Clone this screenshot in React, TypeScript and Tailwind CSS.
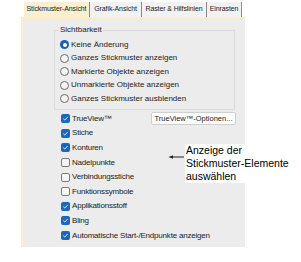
import React from 'react'

const font = { fontFamily: '"Liberation Sans", Arial, sans-serif' }

const Radio = ({ checked, label }: { checked?: boolean; label: string }) => (
  <div className="flex items-center h-[13.5px]">
    {checked ? (
      <span className="w-[9px] h-[9px] rounded-full bg-[#1a5fb4] flex items-center justify-center">
        <span className="w-[4px] h-[4px] rounded-full bg-white" />
      </span>
    ) : (
      <span className="w-[9px] h-[9px] rounded-full border border-[#6b6b6b] bg-[#f4f4f4]" />
    )}
    <span className="ml-[2px] text-[8px] text-[#222] whitespace-nowrap">{label}</span>
  </div>
)

const Check = ({ checked, label }: { checked?: boolean; label: string }) => (
  <div className="flex items-center h-[14.6px]">
    {checked ? (
      <span className="w-[9px] h-[9px] rounded-[2px] bg-[#1867c0] flex items-center justify-center">
        <svg width="7" height="7" viewBox="0 0 8 8">
          <path d="M1.5 4.2 L3.2 5.8 L6.5 2.2" stroke="white" strokeWidth="1" fill="none" />
        </svg>
      </span>
    ) : (
      <span className="w-[9px] h-[9px] rounded-[2px] border border-[#7a7a7a] bg-[#f6f6f6]" />
    )}
    <span className="ml-[2px] text-[8px] tracking-[-0.2px] text-[#222] whitespace-nowrap">{label}</span>
  </div>
)

const tabs = [
  { t: 'Stickmuster-Ansicht', w: 'w-[66px]' },
  { t: 'Grafik-Ansicht', w: 'w-[52px]' },
  { t: 'Raster & Hilfslinien', w: 'w-[65px]' },
  { t: 'Einrasten', w: 'w-[35px]' },
]

export default function App() {
  return (
    <div className="w-[301px] h-[262px] bg-white relative overflow-hidden" style={font}>
      <div className="ml-[21px] w-[224px] overflow-hidden">
        <div className="flex h-[17px] pt-[2px] pl-[3px] bg-white">
          {tabs.map((tab, i) => (
            <div
              key={tab.t}
              className={`${tab.w} shrink-0 h-[15px] flex items-center justify-center whitespace-nowrap overflow-hidden text-[7px] tracking-[-0.1px] text-[#222] border-r border-[#8a8a8a] ${
                i === 0 ? 'bg-[#fcefcf]' : 'bg-[#f2f2f2]'
              }`}
            >
              {tab.t}
            </div>
          ))}
        </div>
        <div className="h-[230px] bg-[#ececec] border-l-2 border-t-2 border-[#fbeec9] pt-[7px]">
          <div className="ml-[31px] w-[181px] relative border border-[#dadada] mt-[4px] pt-[7px] pl-[5px] pb-[3px]">
            <span className="absolute left-[4px] top-[-6px] bg-[#ececec] px-[1px] text-[8px] leading-[10px] text-[#222]">
              Sichtbarkeit
            </span>
            <Radio checked label="Keine Änderung" />
            <Radio label="Ganzes Stickmuster anzeigen" />
            <Radio label="Markierte Objekte anzeigen" />
            <Radio label="Unmarkierte Objekte anzeigen" />
            <Radio label="Ganzes Stickmuster ausblenden" />
          </div>
          <div className="ml-[38px] mt-[2px] w-[175px]">
            <div className="flex items-center justify-between">
              <Check checked label="TrueView™" />
              <div className="w-[85px] h-[13px] border border-[#cfcfcf] bg-white rounded-[2px] flex items-center justify-center whitespace-nowrap text-[7.5px] text-[#222]">
                TrueView™-Optionen...
              </div>
            </div>
            <Check checked label="Stiche" />
            <Check checked label="Konturen" />
            <Check label="Nadelpunkte" />
            <Check label="Verbindungsstiche" />
            <Check label="Funktionssymbole" />
            <Check checked label="Applikationsstoff" />
            <Check checked label="Bling" />
            <Check checked label="Automatische Start-/Endpunkte anzeigen" />
          </div>
        </div>
      </div>
      <div className="absolute left-[168px] top-[144px] flex items-start">
        <svg width="17" height="14" viewBox="0 0 17 14" className="mt-[6px]">
          <path d="M3 7 H16" stroke="#222" strokeWidth="1" />
          <path d="M0.5 7 L5 5.3 L5 8.7 Z" fill="#222" />
        </svg>
        <div className="bg-white text-[10.5px] leading-[13px] text-black pl-[1px] pr-[2px]">
          Anzeige der
          <br />
          Stickmuster-Elemente
          <br />
          auswählen
        </div>
      </div>
    </div>
  )
}
